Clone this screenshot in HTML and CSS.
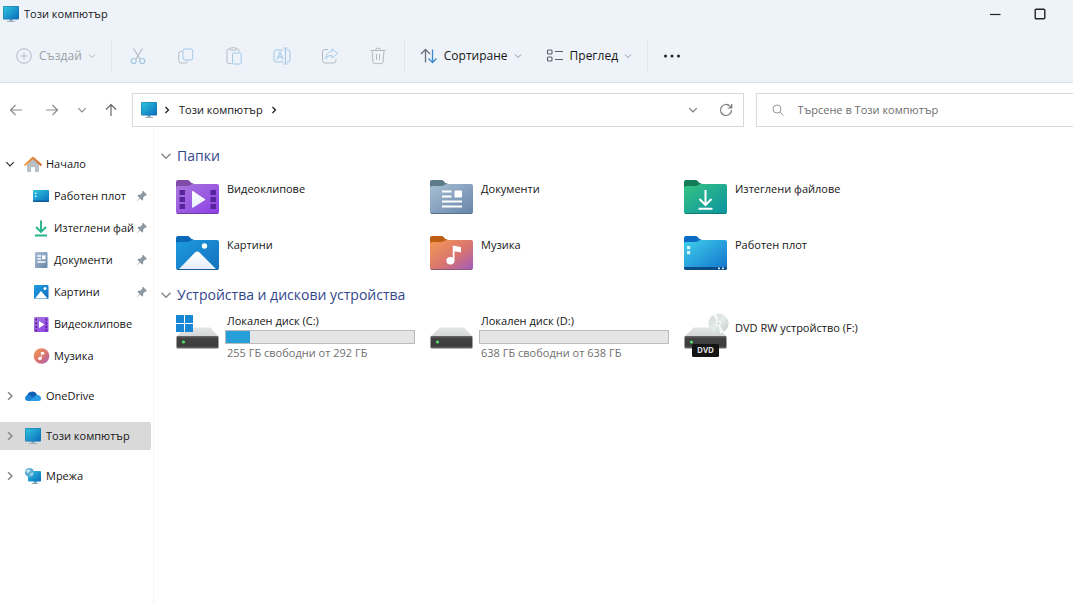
FILE: index.html
```html
<!DOCTYPE html>
<html lang="bg">
<head>
<meta charset="utf-8">
<meta name="viewport" content="width=device-width, initial-scale=1">
<title>Този компютър</title>
<link rel="stylesheet" href="styles.css">
</head>
<body>
<svg class="sprite" aria-hidden="true">
  <defs>
    <linearGradient id="g-screen" x1="0" y1="0" x2="1" y2="1"><stop offset="0" stop-color="#2fc6de"/><stop offset="1" stop-color="#0a6cbe"/></linearGradient>
    <linearGradient id="g-purple" x1="0" y1="0" x2="1" y2="1"><stop offset="0" stop-color="#a978dc"/><stop offset="1" stop-color="#8d3fe6"/></linearGradient>
    <linearGradient id="g-blue" x1="0" y1="0" x2="1" y2="1"><stop offset="0" stop-color="#1c9be0"/><stop offset="1" stop-color="#1470bd"/></linearGradient>
    <linearGradient id="g-gray" x1="0" y1="0" x2="1" y2="1"><stop offset="0" stop-color="#a9bfd4"/><stop offset="1" stop-color="#6684aa"/></linearGradient>
    <linearGradient id="g-orange" x1="0" y1="0" x2="1" y2="1"><stop offset="0" stop-color="#f49a52"/><stop offset="0.55" stop-color="#d9746f"/><stop offset="1" stop-color="#a05cc0"/></linearGradient>
    <linearGradient id="g-green" x1="0" y1="0" x2="1" y2="1"><stop offset="0" stop-color="#36c284"/><stop offset="1" stop-color="#0b93a0"/></linearGradient>
    <linearGradient id="g-desk" x1="0" y1="0" x2="1" y2="1"><stop offset="0" stop-color="#3fd0ec"/><stop offset="1" stop-color="#1272cc"/></linearGradient>
    <linearGradient id="g-white" x1="0" y1="0" x2="0" y2="1"><stop offset="0" stop-color="#ffffff"/><stop offset="1" stop-color="#e6eefb"/></linearGradient>
    <linearGradient id="g-box" x1="0" y1="0" x2="0" y2="1"><stop offset="0" stop-color="#6a6a6a"/><stop offset="0.2" stop-color="#424242"/><stop offset="0.8" stop-color="#3c3c3c"/><stop offset="1" stop-color="#707070"/></linearGradient>
    <linearGradient id="g-lid" x1="0" y1="0" x2="0" y2="1"><stop offset="0" stop-color="#e4e6e6"/><stop offset="1" stop-color="#d3d5d6"/></linearGradient>
    <linearGradient id="g-roof" x1="0" y1="0" x2="1" y2="0"><stop offset="0" stop-color="#f0a04a"/><stop offset="1" stop-color="#cf6a2a"/></linearGradient>
    <linearGradient id="g-disc" x1="0" y1="0" x2="1" y2="1"><stop offset="0" stop-color="#cdd6d6"/><stop offset="0.5" stop-color="#e6ecea"/><stop offset="1" stop-color="#bccac8"/></linearGradient>
  </defs>
  <symbol id="i-pc" viewBox="0 0 18 18">
    <path d="M7.5 14h3v2h-3z" fill="#7fa7bd"/><path d="M5 16h8v1H5z" fill="#9fb2be"/>
    <rect x="1" y="1" width="16" height="13.5" rx="1" fill="#1b6f9f"/><rect x="1.5" y="1.500" width="15" height="12.500" rx="0.6" fill="url(#g-screen)"/>
  </symbol>
  <symbol id="i-chev" viewBox="0 0 8 8"><path d="M1 2.500l3 3 3-3" fill="none" stroke="currentColor"/></symbol>
  <symbol id="i-chev-r" viewBox="0 0 8 8"><path d="M2.500 1l3 3-3 3" fill="none" stroke="currentColor" stroke-width="1.200"/></symbol>
  <symbol id="i-pin" viewBox="0 0 12 12"><path d="M7 .8 11.200 5l-1 .6-.9-.1L7.200 7.600l-.1 2.200-.9.8L4 8.400.9 11.200.8 11l2.800-3.100L1.400 5.700l.8-.9 2.200-.1 2-2.100L6.300 1.600z" fill="#8b97a1"/></symbol>
  <symbol id="i-note" viewBox="0 0 12 16"><ellipse cx="3.500" cy="13" rx="3.200" ry="3" fill="#fff"/><path d="M5.400 13V0.800L12 2v4.300L6.800 5.400V13z" fill="#fff"/></symbol>
  <symbol id="i-drive" viewBox="0 0 43 22">
    <path d="M10 .5h24L42.500 9.500H.5z" fill="url(#g-lid)"/><rect x=".5" y="9" width="42" height="12.500" rx="1" fill="url(#g-box)"/><circle cx="7.500" cy="15" r="1.600" fill="#52e06a"/>
  </symbol>
</svg>

<header class="chrome">
  <div class="titlebar">
    <svg class="ic18"><use href="#i-pc"/></svg>
    <h1 class="title">Този компютър</h1>
    <div class="window-buttons">
      <button type="button" aria-label="Минимизиране"><svg class="ic12" viewBox="0 0 12 12"><path d="M1 6.500h10.500" stroke="#222" stroke-width="1.200"/></svg></button>
      <button type="button" aria-label="Максимизиране"><svg class="ic12" viewBox="0 0 12 12"><rect x="1.200" y="1.200" width="9.600" height="9.600" rx="1" fill="none" stroke="#222" stroke-width="1.400"/></svg></button>
    </div>
  </div>
  <div class="toolbar" role="toolbar">
    <button type="button" class="tool tool-new" disabled>
      <svg class="ic18" viewBox="0 0 18 18" fill="none" stroke="#b5bac1"><circle cx="9" cy="9" r="7.300"/><path d="M9 5.500v7M5.500 9h7" stroke="#a5c3dd"/></svg>
      <span>Създай</span><svg class="ic8"><use href="#i-chev"/></svg>
    </button>
    <span class="divider"></span>
    <button type="button" class="tool-icon" aria-label="Изрязване" disabled><svg class="ic18" viewBox="0 0 18 18" fill="none"><path d="M4.500 1.500l6.800 11M13.500 1.500l-6.800 11" stroke="#b5bac1" stroke-width="1.100"/><circle cx="4.700" cy="14" r="2.500" stroke="#a3c8e6" stroke-width="1.200"/><circle cx="13.300" cy="14" r="2.500" stroke="#a3c8e6" stroke-width="1.200"/></svg></button>
    <button type="button" class="tool-icon" aria-label="Копиране" disabled><svg class="ic18" viewBox="0 0 18 18" fill="none"><path d="M5 4.500H3.700a2 2 0 0 0-2 2v7a2.500 2.500 0 0 0 2.500 2.500h4.300a2 2 0 0 0 2-1.800" stroke="#b5bac1"/><rect x="6" y="2" width="9.700" height="11" rx="2" stroke="#a3c8e6"/></svg></button>
    <button type="button" class="tool-icon" aria-label="Поставяне" disabled><svg class="ic18" viewBox="0 0 18 18" fill="none"><path d="M6.500 16.500h-3a1.500 1.500 0 0 1-1.500-1.500V3.500A1.500 1.500 0 0 1 3.500 2h9A1.500 1.500 0 0 1 14 3.500V5" stroke="#b5bac1"/><rect x="5" y=".8" width="6" height="2.400" rx="1.200" fill="#eef3fa" stroke="#b5bac1"/><rect x="7.500" y="6" width="8.700" height="11" rx="1.200" fill="#eef3fa" stroke="#a3c8e6"/></svg></button>
    <button type="button" class="tool-icon" aria-label="Преименуване" disabled><svg class="ic18" viewBox="0 0 18 18" fill="none" stroke="#a3c8e6"><path d="M10.500 3H3a2 2 0 0 0-2 2v8a2 2 0 0 0 2 2h7.500M14 3h1a2 2 0 0 1 2 2v8a2 2 0 0 1-2 2h-1"/><path d="M10.500 1h4M10.500 17h4M12.500 1v16M4 12.500l3-7.500 3 7.500M5 10h4" stroke-width="1.100"/></svg></button>
    <button type="button" class="tool-icon" aria-label="Споделяне" disabled><svg class="ic18" viewBox="0 0 18 18" fill="none"><path d="M7 2.500H4a2.500 2.500 0 0 0-2.500 2.500v8.500A2.500 2.500 0 0 0 4 16h8.500a2.500 2.500 0 0 0 2.500-2.500V12" stroke="#b5bac1"/><path d="M11 1.800l5.500 4.700L11 11V8.500c-3 0-4.700 1-6.300 3.300C5 7.500 7.500 4.500 11 4.300z" stroke="#a3c8e6"/></svg></button>
    <button type="button" class="tool-icon" aria-label="Изтриване" disabled><svg class="ic18" viewBox="0 0 18 18" fill="none" stroke="#b5bac1"><path d="M1.500 3.500h15M6.500 3.500a2.500 2.500 0 0 1 5 0M3 3.500l1 11.700A1.500 1.500 0 0 0 5.500 16.600h7a1.500 1.500 0 0 0 1.500-1.400l1-11.700M7.500 7v6M10.500 7v6"/></svg></button>
    <span class="divider"></span>
    <button type="button" class="tool">
      <svg class="ic18" viewBox="0 0 18 18" fill="none" stroke-width="1.300"><path d="M5.500 15.500v-13M1 7l4.500-4.500L10 7" stroke="#6a7078"/><path d="M12.500 2.500v13M8.500 11.500l4 4 4-4" stroke="#3c88ca"/></svg>
      <span>Сортиране</span><svg class="ic8"><use href="#i-chev"/></svg>
    </button>
    <button type="button" class="tool tool-view">
      <svg class="ic18" viewBox="0 0 18 18" fill="none" stroke="#5a5f67" stroke-width="1.100"><rect x="1.500" y="3" width="4.500" height="4" rx="1"/><rect x="1.500" y="10" width="4.500" height="4" rx="1"/><path d="M9 4.500h8M9 12.500h8"/></svg>
      <span>Преглед</span><svg class="ic8"><use href="#i-chev"/></svg>
    </button>
    <span class="divider"></span>
    <button type="button" class="tool-icon" aria-label="Още"><svg class="ic18" viewBox="0 0 18 18" fill="#222"><circle cx="2.500" cy="9" r="1.500"/><circle cx="9" cy="9" r="1.500"/><circle cx="15.500" cy="9" r="1.500"/></svg></button>
  </div>
</header>

<div class="navbar">
  <div class="history">
    <button type="button" aria-label="Назад"><svg class="ic14" viewBox="0 0 14 14"><path d="M13 7H1.500M6.500 2l-5 5 5 5"/></svg></button>
    <button type="button" aria-label="Напред"><svg class="ic14" viewBox="0 0 14 14"><path d="M1 7h11.500M7.500 2l5 5-5 5"/></svg></button>
    <button type="button" class="recent" aria-label="Последни"><svg class="ic10" viewBox="0 0 8 8"><path d="M1 2.500l3 3 3-3"/></svg></button>
    <button type="button" class="up" aria-label="Нагоре"><svg class="ic14" viewBox="0 0 14 14"><path d="M7 13V1.500M2 6.500l5-5 5 5"/></svg></button>
  </div>
  <nav class="address" aria-label="Адрес">
    <svg class="ic18"><use href="#i-pc"/></svg>
    <svg class="ic8"><use href="#i-chev-r"/></svg>
    <a href="#pc">Този компютър</a>
    <svg class="ic8"><use href="#i-chev-r"/></svg>
    <button type="button" class="drop" aria-label="Предишни местоположения"><svg class="ic10"><use href="#i-chev"/></svg></button>
    <button type="button" aria-label="Обновяване"><svg class="ic14" viewBox="0 0 14 14" fill="none" stroke="#777" stroke-width="1.200"><path d="M12.500 7A5.500 5.500 0 1 1 11 3.200L12.500 5M12.700 1v4H8.700"/></svg></button>
  </nav>
  <label class="search">
    <svg class="ic12" viewBox="0 0 12 12" fill="none" stroke="#999"><circle cx="5" cy="5" r="4"/><path d="M8 8l3.500 3.500"/></svg>
    <input type="search" placeholder="Търсене в Този компютър" aria-label="Търсене в Този компютър">
  </label>
</div>

<div class="panes">
  <nav class="sidebar" aria-label="Навигация">
    <ul class="tree">
      <li>
        <a href="#home" class="node open"><svg class="ic10"><use href="#i-chev"/></svg>
          <svg class="ic18" viewBox="0 0 18 18"><path d="M3 8l6-5.500L15 8v8.200a.8.800 0 0 1-.8.800H11v-5H7v5H3.800a.8.800 0 0 1-.8-.8z" fill="#b9c0c8"/><path d="M1.300 9.800 9 2.800l7.700 7" fill="none" stroke="url(#g-roof)" stroke-width="2.200" stroke-linecap="round" stroke-linejoin="round"/></svg><span>Начало</span></a>
        <ul class="pinned">
          <li><a href="#desktop" class="node"><svg class="ic18" viewBox="0 0 18 18"><rect x="1" y="3" width="16" height="12" rx="1" fill="url(#g-screen)"/><path d="M1 13.500h16V14a1 1 0 0 1-1 1H2a1 1 0 0 1-1-1z" fill="#0d5a9c"/><path d="M3 5.500h1.500V7H3zM3 8.500h1.500V10H3z" fill="#d8f5ff"/></svg><span>Работен плот</span><svg class="ic12 pin"><use href="#i-pin"/></svg></a></li>
          <li><a href="#downloads" class="node" title="Изтеглени файлове"><svg class="ic18" viewBox="0 0 18 18" fill="none" stroke="#27b48b" stroke-width="1.900"><path d="M9 1.500v11M4 8l5 5 5-5M3 16.500h12"/></svg><span>Изтеглени фай</span><svg class="ic12 pin"><use href="#i-pin"/></svg></a></li>
          <li><a href="#documents" class="node"><svg class="ic18" viewBox="0 0 18 18"><rect x="3" y="1" width="12.500" height="16" rx="1" fill="url(#g-gray)"/><path d="M5.500 5H9M5.500 8H9M5.500 11h8" stroke="#fff" stroke-width="1.300"/><path d="M10 4.300h3.500v4H10z" fill="#fff"/></svg><span>Документи</span><svg class="ic12 pin"><use href="#i-pin"/></svg></a></li>
          <li><a href="#pictures" class="node"><svg class="ic18" viewBox="0 0 18 18"><rect x="2" y="2" width="14.500" height="14" rx="1" fill="url(#g-blue)"/><path d="M3 15.500 9 8l6.500 7.500z" fill="#fff"/><circle cx="13" cy="5.500" r="1.500" fill="#fff"/></svg><span>Картини</span><svg class="ic12 pin"><use href="#i-pin"/></svg></a></li>
          <li><a href="#videos" class="node"><svg class="ic18" viewBox="0 0 18 18"><rect x="2" y="2" width="14.500" height="15" rx="1" fill="url(#g-purple)"/><path d="M4.200 3.500v13M14.300 3.500v13" stroke="#52208f" stroke-width="1.600" stroke-dasharray="2 1.700"/><path d="M7 6v7l5.500-3.500z" fill="#fff"/></svg><span>Видеоклипове</span></a></li>
          <li><a href="#music" class="node"><svg class="ic18" viewBox="0 0 18 18"><circle cx="9.500" cy="9" r="7.800" fill="url(#g-orange)"/><use href="#i-note" x="6" y="4" width="6.500" height="9.500"/></svg><span>Музика</span></a></li>
        </ul>
      </li>
      <li><a href="#onedrive" class="node"><svg class="ic10"><use href="#i-chev-r"/></svg><svg class="ic18" viewBox="0 0 18 18"><path d="M3 9.500A5.300 5.300 0 0 1 13 7.500l-2 6H4.500z" fill="#0f62b8"/><path d="M1 11.300c0-2 1.600-3.300 3.300-3.200 1.200.1 2 .5 2.800 1l6 4.400-1 .5H4.200c-1.700 0-3.200-1-3.200-2.700z" fill="#1b84d6"/><path d="M5 14l6.200-5c2.400-2.200 5.800-.4 5.900 2.300.1 1.500-1 2.700-2.600 2.700z" fill="#2b9ce6"/></svg><span>OneDrive</span></a></li>
      <li><a href="#pc" class="node selected" aria-current="page"><svg class="ic10"><use href="#i-chev-r"/></svg><svg class="ic18"><use href="#i-pc"/></svg><span>Този компютър</span></a></li>
      <li><a href="#network" class="node"><svg class="ic10"><use href="#i-chev-r"/></svg><svg class="ic18" viewBox="0 0 18 18"><path d="M8 16h6v1H8z" fill="#8ba4b4"/><path d="M10 14h2.500v2H10z" fill="#6f9ab2"/><rect x="4" y="4" width="13" height="10.500" rx="1" fill="url(#g-screen)"/><circle cx="5.500" cy="5.500" r="4.500" fill="#58aed2"/><path d="M2 3.500l3-1.500 1.500 2-3 2.500z" fill="#c5e2ee"/><path d="M6.500 6l3-.5-1 3-2 .5z" fill="#a9d5e6"/></svg><span>Мрежа</span></a></li>
    </ul>
  </nav>

  <main class="content" id="pc">
    <section>
      <h2 class="group"><svg class="ic12" viewBox="0 0 8 8"><use href="#i-chev" width="8" height="8"/></svg>Папки</h2>
      <div class="grid folders">
        <a href="#videos" class="tile"><svg class="folder" viewBox="0 0 43 34"><path d="M0 2a2 2 0 0 1 2-2h9.500c2.500 0 3 3.500 6 3.500V10H0z" fill="#7f4aa8"/><path d="M0 8c0-1.300.8-2 2-2h9c3 0 3.500-2 6-2h24a2 2 0 0 1 2 2v26a2 2 0 0 1-2 2H2a2 2 0 0 1-2-2z" fill="url(#g-purple)"/><path d="M3.500 10H9v5H3.500zM3.500 17H9v5H3.500zM3.500 24H9v5H3.500zM34.500 10H40v5h-5.500zM34.500 17H40v5h-5.500zM34.500 24H40v5h-5.500z" fill="#56249b"/><path d="M16 11.500v15.800c0 .5.400.7.800.5l12-7.600c.5-.3.500-.8 0-1.100l-12-8.100c-.4-.2-.8 0-.8.500z" fill="url(#g-white)"/><path d="M1 33.500h41" stroke="#6c3f9f"/></svg><span>Видеоклипове</span></a>
        <a href="#documents" class="tile"><svg class="folder" viewBox="0 0 43 34"><path d="M0 2a2 2 0 0 1 2-2h9.500c2.500 0 3 3.500 6 3.500V10H0z" fill="#5c7a89"/><path d="M0 8c0-1.300.8-2 2-2h9c3 0 3.500-2 6-2h24a2 2 0 0 1 2 2v26a2 2 0 0 1-2 2H2a2 2 0 0 1-2-2z" fill="url(#g-gray)"/><path d="M12 11.500h9.500M12 16.500h9.500M12 21.500h20M12 26.500h20" stroke="#fff" stroke-width="2"/><rect x="24.500" y="10.500" width="7.500" height="7" rx=".8" fill="#fff"/><path d="M1 33.500h41" stroke="#57718b"/></svg><span>Документи</span></a>
        <a href="#downloads" class="tile"><svg class="folder" viewBox="0 0 43 34"><path d="M0 2a2 2 0 0 1 2-2h9.500c2.500 0 3 3.500 6 3.500V10H0z" fill="#117c55"/><path d="M0 8c0-1.300.8-2 2-2h9c3 0 3.500-2 6-2h24a2 2 0 0 1 2 2v26a2 2 0 0 1-2 2H2a2 2 0 0 1-2-2z" fill="url(#g-green)"/><path d="M21.500 10v14.500M15.500 19l6 6 6-6M14.500 28.800h14" fill="none" stroke="#fff" stroke-width="2"/><path d="M1 33.500h41" stroke="#0f7c70"/></svg><span>Изтеглени файлове</span></a>
        <a href="#pictures" class="tile"><svg class="folder" viewBox="0 0 43 34"><path d="M0 2a2 2 0 0 1 2-2h9.500c2.500 0 3 3.500 6 3.500V10H0z" fill="#0c69b8"/><path d="M0 8c0-1.300.8-2 2-2h9c3 0 3.500-2 6-2h24a2 2 0 0 1 2 2v26a2 2 0 0 1-2 2H2a2 2 0 0 1-2-2z" fill="url(#g-blue)"/><path d="M3 33 19 16.500c1.500-1.500 3-1.500 4.500 0L40 33z" fill="url(#g-white)"/><circle cx="28.500" cy="10" r="2.700" fill="#fff"/><path d="M1 33.500h41" stroke="#1b5c91"/></svg><span>Картини</span></a>
        <a href="#music" class="tile"><svg class="folder" viewBox="0 0 43 34"><path d="M0 2a2 2 0 0 1 2-2h9.500c2.500 0 3 3.500 6 3.500V10H0z" fill="#bc5d13"/><path d="M0 8c0-1.300.8-2 2-2h9c3 0 3.500-2 6-2h24a2 2 0 0 1 2 2v26a2 2 0 0 1-2 2H2a2 2 0 0 1-2-2z" fill="url(#g-orange)"/><use href="#i-note" x="16" y="8" width="15" height="21"/><path d="M1 33.500h41" stroke="#8d5a72"/></svg><span>Музика</span></a>
        <a href="#desktop" class="tile"><svg class="folder" viewBox="0 0 43 34"><path d="M0 2a2 2 0 0 1 2-2h9.500c2.500 0 3 3.500 6 3.500V10H0z" fill="#0c6cc4"/><path d="M0 8c0-1.300.8-2 2-2h9c3 0 3.500-2 6-2h24a2 2 0 0 1 2 2v26a2 2 0 0 1-2 2H2a2 2 0 0 1-2-2z" fill="url(#g-desk)"/><path d="M0 31h43v1a2 2 0 0 1-2 2H2a2 2 0 0 1-2-2z" fill="#0c4d86"/><path d="M3 10h3.200v3.200H3zM3 15h3.200v3.200H3z" fill="#d6f6ff"/><path d="M34 31.500h2v1.800h-2zM38 31.500h2v1.800h-2z" fill="#c8e6f8"/></svg><span>Работен плот</span></a>
      </div>
    </section>
    <section>
      <h2 class="group"><svg class="ic12" viewBox="0 0 8 8"><use href="#i-chev" width="8" height="8"/></svg>Устройства и дискови устройства</h2>
      <div class="grid drives">
        <a href="#c" class="tile">
          <svg class="disk" viewBox="0 0 45 44"><use href="#i-drive" x="0" y="14" width="43" height="22"/><path d="M0 2h8v8H0zM9 2h8v8H9zM0 11h8v8H0zM9 11h8v8H9z" fill="#1787d4"/></svg>
          <span class="info"><span>Локален диск (C:)</span><span class="meter"><span class="used" style="width:13%"></span></span><span class="free">255 ГБ свободни от 292 ГБ</span></span>
        </a>
        <a href="#d" class="tile">
          <svg class="disk" viewBox="0 0 45 44"><use href="#i-drive" x="0" y="14" width="43" height="22"/></svg>
          <span class="info"><span>Локален диск (D:)</span><span class="meter"></span><span class="free">638 ГБ свободни от 638 ГБ</span></span>
        </a>
        <a href="#f" class="tile optical">
          <svg class="disk" viewBox="0 0 45 44"><use href="#i-drive" x="0" y="14" width="43" height="22"/><circle cx="34.500" cy="10.500" r="10" fill="url(#g-disc)"/><path d="M34.500 10.500 29 2.200a10 10 0 0 1 4-1.600zM34.500 10.500 40 18.800a10 10 0 0 1-4 1.600z" fill="#f6f8f8"/><circle cx="34.500" cy="10.500" r="2.400" fill="#f4f6f6"/><circle cx="34.500" cy="10.500" r="1" fill="#c0caca"/><rect x="8" y="31" width="27" height="13" rx="1.500" fill="#141414"/><text class="badge" x="21.500" y="40" text-anchor="middle">DVD</text></svg>
          <span class="info"><span>DVD RW устройство (F:)</span></span>
        </a>
      </div>
    </section>
  </main>
</div>
</body>
</html>
```
FILE: styles.css
```css
* { box-sizing: border-box; }
body {
  margin: 0;
  min-height: 100vh;
  display: flex;
  flex-direction: column;
  background: #fff;
  color: #161616;
  font: 11px/16px "Open Sans", "Noto Sans", sans-serif;
  overflow-x: hidden;
}
button {
  display: flex;
  align-items: center;
  justify-content: center;
  margin: 0;
  padding: 0;
  border: 0;
  background: none;
  color: inherit;
  font: inherit;
}
a { color: inherit; text-decoration: none; }
ul { list-style: none; margin: 0; padding: 0; }
svg { flex: none; display: block; }
.sprite { position: absolute; width: 0; height: 0; }
.ic8 { width: 8px; height: 8px; }
.ic10 { width: 10px; height: 10px; }
.ic12 { width: 12px; height: 12px; }
.ic14 { width: 14px; height: 14px; }
.ic18 { width: 18px; height: 18px; }

.chrome { background: #eef3fa; border-bottom: 1px solid #dcdfe3; }
.titlebar { display: flex; align-items: center; height: 27px; padding-left: 2px; gap: 4px; }
.title { margin: 0; font-size: 11px; font-weight: 400; }
.window-buttons { display: flex; margin-left: auto; padding-right: 11px; }
.window-buttons button { width: 45px; height: 26px; }

.toolbar { display: flex; align-items: center; height: 55px; padding: 3px 0 0 15px; font-size: 12px; }
.tool { height: 32px; gap: 6px; }
.tool svg:last-child { color: #8d939b; }
.tool-new { color: #9a9fa6; gap: 6px; }
.tool-new svg:last-child { color: #b0b5bb; }
.tool-view { margin-left: 24px; }
.tool-icon { width: 48px; height: 32px; }
.divider { width: 1px; height: 32px; background: #e0e5ec; margin-left: 15px; }
.divider + .tool-icon { margin-left: 2px; }
.tool-icon + .divider { margin-left: 2px; }
.divider + .tool { margin-left: 15px; }
.divider + .tool-icon:last-child { margin-left: 0; }

.navbar { display: flex; align-items: center; padding-top: 10px; }
.history { display: flex; width: 132px; flex: none; padding-left: 9px; }
.history button { width: 14px; height: 32px; margin-right: 22px; }
.history svg { fill: none; stroke: #8b8b8b; stroke-width: 1.200; }
.history .recent { margin-right: 17px; width: 10px; margin-left: -4px; }
.history .up { margin: 0; }
.history .up svg { stroke: #666; }
.history .recent svg { stroke-width: 1; }
.address, .search { display: flex; align-items: center; height: 34px; border: 1px solid #d9d9d9; background: #fff; min-width: 0; }
.address { flex: 0 0 57%; padding: 0 10px 0 7px; margin-right: 12px; white-space: nowrap; }
.address > svg + svg { margin: 0 8px 0 5px; }
.address a { margin-right: 7px; }
.address button { height: 28px; }
.address .drop { margin: 0 21px 0 auto; color: #777; }
.search { flex: 1; border-right: 0; padding-left: 15px; gap: 14px; }
.search input { flex: 1; min-width: 0; border: 0; outline: 0; padding: 0; background: none; font: inherit; color: inherit; }
.search input::placeholder { color: #6f6f6f; opacity: 1; }

.panes { display: flex; flex: 1; }
.sidebar { width: 154px; flex: none; border-right: 1px solid #f4f4f4; padding: 23px 2px 0 0; }
.tree, .pinned { display: grid; gap: 12px; grid-template-columns: 100%; }
.pinned { gap: 4px; padding-top: 4px; }
.node { display: flex; align-items: center; height: 28px; padding-left: 5px; white-space: nowrap; }
.node > .ic10 { color: #858585; margin-right: 9px; }
.node.open > .ic10 { color: #333; }
.node > .ic18 { margin-right: 4px; }
.pinned .node { padding: 0 3px 0 32px; }
.pinned .node span { flex: 1; }
.selected { background: #d9d9d9; border-radius: 0 2px 2px 0; }

.content { flex: 1; min-width: 0; padding: 17px 0 24px 22px; }
.group { display: flex; align-items: center; gap: 5px; margin: 0 0 12px -16px; font-size: 14px; line-height: 24px; font-weight: 400; color: #33478c; }
.group svg { color: #8a8a8a; }
section + section .group { margin: 13px 0 6px -16px; }
.grid { display: grid; grid-template-columns: repeat(auto-fill, 254px); row-gap: 22px; }
.tile { display: flex; align-items: flex-start; }
.folders .tile span { padding-top: 1px; }
.folder { width: 43px; height: 34px; margin-right: 8px; }
.disk { width: 45px; height: 44px; margin-right: 4px; }
.info { display: grid; width: 190px; }
.info > span { padding-left: 2px; }
.info .meter { height: 14px; padding: 0; background: #e5e5e5; border: 1px solid #bcbcbc; margin: 1px 0; }
.used { display: block; height: 100%; background: #269fd9; }
.free { color: #6f6f6f; }
.optical .info { padding-top: 7px; }
.badge { font: 700 8px/8px "Open Sans", sans-serif; fill: #ddd; }
```
